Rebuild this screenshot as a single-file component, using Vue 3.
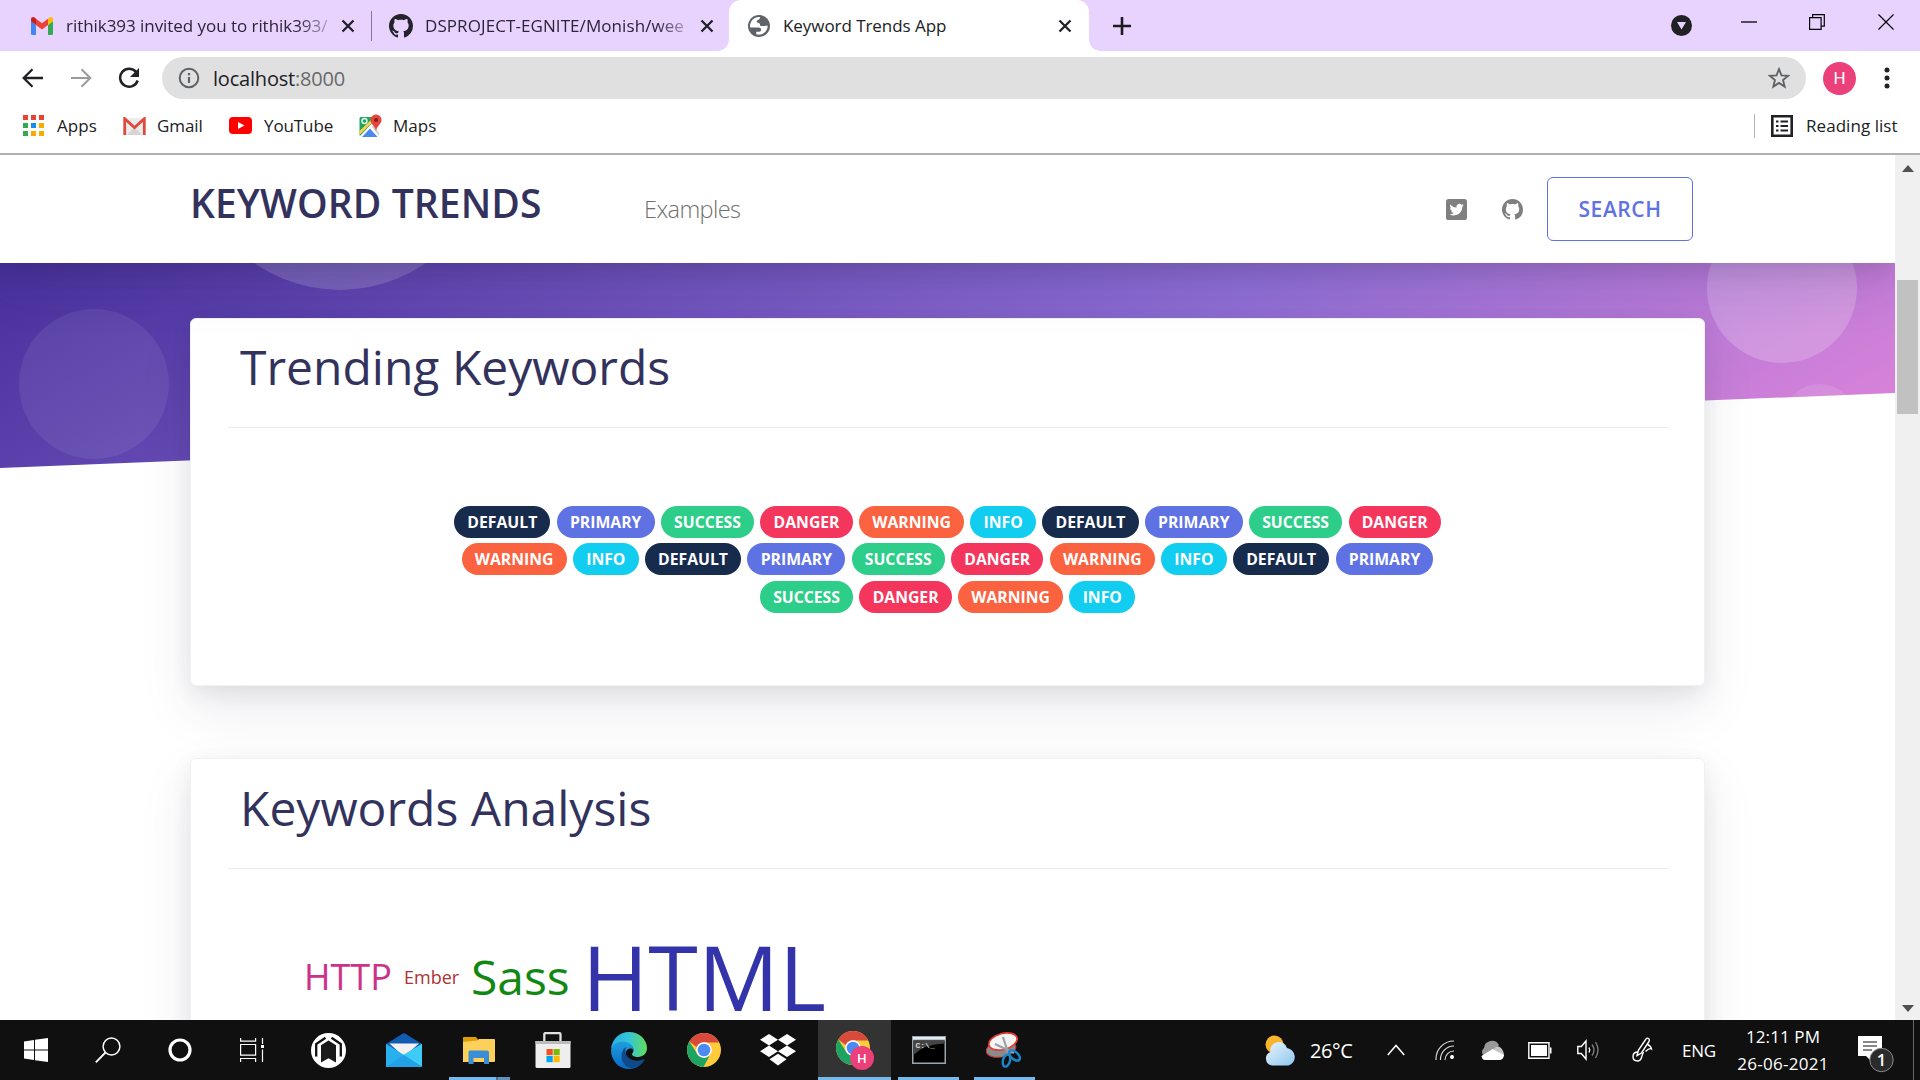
<script setup>
const kinds = ['default', 'primary', 'success', 'danger', 'warning', 'info']
const rows = [
  [0, 1, 2, 3, 4, 5, 0, 1, 2, 3],
  [4, 5, 0, 1, 2, 3, 4, 5, 0, 1],
  [2, 3, 4, 5],
].map((r) => r.map((i) => kinds[i]))
const appDots = ['#ea4335', '#ea4335', '#ea4335', '#34a853', '#1a8cf0', '#f9ab00', '#34a853', '#f9ab00', '#f9ab00']
const octocat =
  'M8 0C3.58 0 0 3.58 0 8c0 3.54 2.29 6.53 5.47 7.59.4.07.55-.17.55-.38 0-.19-.01-.82-.01-1.49-2.01.37-2.53-.49-2.69-.94-.09-.23-.48-.94-.82-1.13-.28-.15-.68-.52-.01-.53.63-.01 1.08.58 1.23.82.72 1.21 1.87.87 2.33.66.07-.52.28-.87.51-1.07-1.78-.2-3.64-.89-3.64-3.95 0-.87.31-1.59.82-2.15-.08-.2-.36-1.02.08-2.12 0 0 .67-.21 2.2.82.64-.18 1.32-.27 2-.27s1.36.09 2 .27c1.53-1.04 2.2-.82 2.2-.82.44 1.1.16 1.92.08 2.12.51.56.82 1.27.82 2.15 0 3.07-1.87 3.75-3.65 3.95.29.25.54.73.54 1.48 0 1.07-.01 1.93-.01 2.2 0 .21.15.46.55.38A8.01 8.01 0 0016 8c0-4.42-3.58-8-8-8z'
</script>

<template>
  <div class="screen">
    <!-- Tab strip -->
    <header class="tabs">
      <div class="tab t1">
        <svg class="fav" width="22" height="18" viewBox="0 0 22 18">
          <path fill="#4285f4" d="M0 4v12.500Q0 18 1.500 18H5V8z" />
          <path fill="#34a853" d="M22 4v12.500Q22 18 20.500 18H17V8z" />
          <path fill="#ea4335" d="M5 8V1.800L11 6.300l6-4.500V8l-6 4.500z" />
          <path fill="#c5221f" d="M0 4V2.300C0 .1 2.500-.6 4 .7L5 1.800V8L0 4.300z" />
          <path fill="#fbbc04" d="M22 4V2.300C22 .1 19.500-.6 18 .7L17 1.800V8l5-3.700z" />
        </svg>
        <span class="label l1">rithik393 invited you to rithik393/</span>
        <svg class="x" width="14" height="14" viewBox="0 0 14 14"><path d="M1.500 1.500l11 11M12.500 1.500l-11 11" /></svg>
      </div>
      <i class="tsep"></i>
      <div class="tab t2">
        <svg class="fav" width="24" height="24" viewBox="0 0 16 16"><path fill="#24222b" :d="octocat" /></svg>
        <span class="label l2">DSPROJECT-EGNITE/Monish/wee</span>
        <svg class="x" width="14" height="14" viewBox="0 0 14 14"><path d="M1.500 1.500l11 11M12.500 1.500l-11 11" /></svg>
      </div>
      <div class="tab active">
        <svg class="fav" width="22" height="22" viewBox="2 2 20 20">
          <circle cx="12" cy="12" r="10" fill="#5f6368" />
          <path fill="#fff" d="M13 3.900c-.1 1.800-.8 2.300-1.900 2.600-1.400.4-1.500 1.900-.5 2.400 1.300.5 2.400.8 2.400 2.100 0 .8.6 1.100 1.700 1.100 1.900 0 2.800-.6 5.200-.3-.1 4.600-3.700 8.100-8 8.100-.8 0-1.700-.1-2.400-.4v-2.300h2.700c1 0 1.700-.8 1.700-1.800 0-1.400-1-2.100-2.400-2.100H4c-.3-1-.2-2.500.2-3.500 1.100-3.700 4.600-6.500 8.800-5.900z" />
        </svg>
        <span class="label l3">Keyword Trends App</span>
        <svg class="x" width="14" height="14" viewBox="0 0 14 14"><path d="M1.500 1.500l11 11M12.500 1.500l-11 11" /></svg>
      </div>
      <svg class="plus" width="18" height="18" viewBox="0 0 18 18"><path d="M9 0v18M0 9h18" stroke="#1c1b22" stroke-width="2.600" /></svg>
      <div class="win">
        <svg width="21" height="21" viewBox="0 0 21 21"><circle cx="10.500" cy="10.500" r="10.500" fill="#202124" /><path d="M6 7h9l-4.500 7.500z" fill="#e8d3ff" /></svg>
        <svg class="w2" width="16" height="16" viewBox="0 0 16 16"><path d="M0 8h16" stroke="#000" stroke-width="1.300" /></svg>
        <svg class="w3" width="16" height="16" viewBox="0 0 16 16"><path d="M.6 3.600h11.500v11.700H.6zM3.600 3.600V.6h11.700v11.500h-3.200" fill="none" stroke="#000" stroke-width="1.200" /></svg>
        <svg class="w4" width="16" height="16" viewBox="0 0 16 16"><path d="M.5.5l15 15M15.500.5l-15 15" stroke="#000" stroke-width="1.200" /></svg>
      </div>
    </header>

    <!-- Address bar -->
    <div class="toolbar">
      <svg width="22" height="20" viewBox="0 0 22 20"><path d="M21 10H2M10.500 1.200L1.700 10l8.800 8.800" fill="none" stroke="#202124" stroke-width="2.300" /></svg>
      <svg class="fwd" width="22" height="20" viewBox="0 0 22 20"><path d="M1 10h19M11.500 1.200l8.800 8.800-8.800 8.800" fill="none" stroke="#9b9b9b" stroke-width="2" /></svg>
      <svg class="rel" width="22" height="22" viewBox="0 0 22 22"><path d="M18.500 5.500A9 9 0 1 0 19.700 13.500" fill="none" stroke="#202124" stroke-width="2.500" /><path d="M21 1v9h-9z" fill="#202124" /></svg>
      <div class="omni">
        <svg width="22" height="22" viewBox="0 0 22 22"><circle cx="11" cy="11" r="9.300" fill="none" stroke="#5f6368" stroke-width="2" /><path d="M11 10v6M11 6v2.200" stroke="#5f6368" stroke-width="2.200" /></svg>
        <span class="url">localhost<em>:8000</em></span>
        <svg class="star" width="22" height="22" viewBox="0 0 24 24"><path d="M12 2.300l2.700 6.800 7.300.5-5.600 4.600 1.800 7.200L12 17.400l-6.200 4 1.800-7.200L2 9.600l7.300-.5z" fill="none" stroke="#5f6368" stroke-width="2" /></svg>
      </div>
      <span class="avatar">H</span>
      <svg class="dots" width="6" height="22" viewBox="0 0 6 22"><circle cx="3" cy="3" r="2.500" /><circle cx="3" cy="11" r="2.500" /><circle cx="3" cy="19" r="2.500" /></svg>
    </div>

    <!-- Bookmarks -->
    <div class="marks">
      <span class="apps"><i v-for="(c, i) in appDots" :key="i" :style="{ background: c }"></i></span>
      <span class="mk m1">Apps</span>
      <svg class="i2" width="23" height="18" viewBox="0 0 23 18"><path fill="#ececec" d="M1 1h21v17H1z" /><path fill="#d5d5d5" d="M4 18l7.500-8 7.500 8z" /><path d="M1.700 18V1.700L11.500 10.500 21.300 1.700V18" fill="none" stroke="#dd4b3e" stroke-width="2.800" /></svg>
      <span class="mk m2">Gmail</span>
      <svg class="i3" width="23" height="17" viewBox="0 0 23 17"><rect width="23" height="17" rx="4" fill="red" /><path d="M9 5l6.500 3.500L9 12z" fill="#fff" /></svg>
      <span class="mk m3">YouTube</span>
      <svg class="i4" width="23" height="24" viewBox="0 0 23 24">
        <path fill="#1fa463" d="M2 3h17v19H2q-1.500 0-1.500-1.500V4.500Q.5 3 2 3z" />
        <path fill="#fff" d="M1 22L14 8l6 4v10z" /><path fill="#4a89f3" d="M3 23l8-8.500 7.500 8.500z" /><path fill="#ffd04b" d="M.5 17L13 5l1.500 2L.5 21z" /><path fill="#cfd3d6" d="M13 13l2-2 5 8v3z" />
        <circle cx="5.500" cy="7" r="2.500" fill="none" stroke="#e8f5e9" stroke-width="1.400" />
        <path fill="#e8453c" d="M17 .5a5.500 5.500 0 0 1 5.500 5.500c0 4-4.500 5.500-5.500 11-1-5.500-5.500-7-5.500-11A5.500 5.500 0 0 1 17 .5z" /><circle cx="17" cy="6" r="2" fill="#7b231e" />
      </svg>
      <span class="mk m4">Maps</span>
      <i class="msep"></i>
      <svg class="i5" width="22" height="22" viewBox="0 0 22 22"><path d="M1.300 1.300h19.400v19.400H1.300z" fill="none" stroke="#202124" stroke-width="2.600" /><path d="M5 6.500h2.500M5 11h2.500M5 15.500h2.500M9.500 6.500H17M9.500 11H17M9.500 15.500H17" stroke="#202124" stroke-width="2.200" /></svg>
      <span class="mk m5">Reading list</span>
    </div>

    <!-- Web page -->
    <div class="view">
      <main class="page">
        <nav class="nav">
          <h1>KEYWORD TRENDS</h1>
          <a class="ex">Examples</a>
          <svg class="tw" width="21" height="21" viewBox="0 0 24 24"><rect width="24" height="24" rx="3" fill="#7f7f7f" /><path fill="#fff" transform="translate(4 4) scale(.68)" d="M23.953 4.570a10 10 0 01-2.825.775 4.958 4.958 0 002.163-2.723c-.951.555-2.005.959-3.127 1.184a4.920 4.920 0 00-8.384 4.482C7.690 8.095 4.067 6.130 1.640 3.162a4.822 4.822 0 00-.666 2.475c0 1.710.87 3.213 2.188 4.096a4.904 4.904 0 01-2.228-.616v.06a4.923 4.923 0 003.946 4.827 4.996 4.996 0 01-2.212.085 4.936 4.936 0 004.604 3.417 9.867 9.867 0 01-6.102 2.105c-.39 0-.779-.023-1.170-.067a13.995 13.995 0 007.557 2.209c9.053 0 13.998-7.496 13.998-13.985 0-.21 0-.42-.015-.63A9.935 9.935 0 0024 4.590z" /></svg>
          <svg class="gh" width="21" height="21" viewBox="0 0 16 16"><path fill="#7f7f7f" :d="octocat" /></svg>
          <a class="search">SEARCH</a>
        </nav>
        <div class="hero"><i class="b1"></i><i class="b2"></i><i class="b3"></i><i class="b4"></i></div>
        <div class="content">
          <section class="card first">
            <h2>Trending Keywords</h2>
            <hr />
            <div class="badges">
              <div v-for="(row, r) in rows" :key="r" class="row">
                <span v-for="(k, i) in row" :key="i" class="badge" :class="k">{{ k }}</span>
              </div>
            </div>
          </section>
          <section class="card second">
            <h2>Keywords Analysis</h2>
            <hr />
            <div class="cloud">
              <span class="http">HTTP</span><span class="ember">Ember</span><span class="sass">Sass</span><span class="html">HTML</span>
            </div>
          </section>
        </div>
      </main>
      <aside class="scroll">
        <svg width="12" height="7" viewBox="0 0 12 7"><path d="M6 0l6 7H0z" fill="#505050" /></svg>
        <i class="thumb"></i>
        <svg width="12" height="7" viewBox="0 0 12 7"><path d="M6 7l6-7H0z" fill="#505050" /></svg>
      </aside>
    </div>

    <!-- Taskbar -->
    <footer class="bar">
      <div class="cell" style="width: 72px">
        <svg width="24" height="24" viewBox="0 0 24 24"><path fill="#fff" d="M0 3.400L10 2v9.500H0zM11 1.800L24 0v11.500H11zM0 12.500h10V22L0 20.600zM11 12.500h13V24l-13-1.800z" /></svg>
      </div>
      <div class="cell" style="width: 72px">
        <svg width="26" height="26" viewBox="0 0 26 26"><path d="M10.500 15.500L.8 25.300" stroke="#fff" stroke-width="1.800" /><circle cx="16.500" cy="9.500" r="8.400" fill="none" stroke="#fff" stroke-width="1.500" /></svg>
      </div>
      <div class="cell" style="width: 72px">
        <svg width="24" height="24" viewBox="0 0 24 24"><circle cx="12" cy="12" r="10" fill="none" stroke="#fff" stroke-width="3.200" /></svg>
      </div>
      <div class="cell" style="width: 72px">
        <svg width="24" height="24" viewBox="0 0 24 24" fill="none" stroke="#fff" stroke-width="1.200"><path d="M.6 6.500h15v10.700H.6zM.6 0v3.200h15V0M.6 24v-3.500h15V24M22.500 0v6M22.500 11.500V24" /><path fill="#fff" stroke="none" d="M21 7h3v3h-3z" /></svg>
      </div>
      <div class="cell" style="width: 80px">
        <svg width="35" height="35" viewBox="0 0 35 35"><circle cx="17.500" cy="17.500" r="17.500" fill="#fff" /><path fill="#1a1a1a" d="M10 12.300l7.500-4.800 7.500 4.800V29.500l-7.500-4.300-7.500 4.300z" /><path d="M14.500 4.800L5.200 11v12.500M20.500 4.800l9.300 6.200v12.500" fill="none" stroke="#101010" stroke-width="2.300" /></svg>
      </div>
      <div class="cell" style="width: 72px">
        <svg width="36" height="34" viewBox="0 0 36 34"><path fill="#0f5cb0" d="M0 11L16.500.8q1.500-1 3 0L36 11v8H0z" /><path fill="#f2f2f2" d="M3.500 10.500h29.500L20 22h-4z" /><path fill="#28b0ee" d="M0 10.800L18 22 36 34H0z" /><path fill="#3ecbf6" d="M36 10.800L17 22l19 12z" /><path fill="#1b97e4" d="M0 34l18-12.200L36 34z" opacity=".6" /></svg>
      </div>
      <div class="cell" style="width: 78px">
        <svg width="32" height="27" viewBox="0 0 32 27"><path fill="#e09c09" d="M0 1q0-1 1-1h12l2 2.500V8H0z" /><path fill="#fdd05a" d="M0 5l14-1.500L16 2h15q1 0 1 1v21q0 1-1 1H0z" /><path fill="#3a8ed8" d="M7 13.500h17q2 0 2 2V27h-5v-6H10.500v6H5.500V15q0-1.500 1.500-1.500z" /></svg>
        <b class="ul split" style="width: 61px"></b>
      </div>
      <div class="cell" style="width: 70px">
        <svg width="36" height="36" viewBox="0 0 36 36"><path d="M9.300 12V2.500q0-1.500 1.500-1.500H24q1.500 0 1.500 1.500V12" fill="none" stroke="#e0e0e0" stroke-width="2.300" /><path fill="#eee" d="M.5 9h35v25.500q0 1.500-1.500 1.500H2q-1.500 0-1.500-1.500z" /><path fill="#bbb" d="M.5 9h35v3H.5z" /><path fill="#f25022" d="M11.500 17h6.200v6.200h-6.200z" /><path fill="#7fba00" d="M18.500 17h6.200v6.200h-6.200z" /><path fill="#00a4ef" d="M11.500 24h6.200v6.200h-6.200z" /><path fill="#ffb900" d="M18.500 24h6.200v6.200h-6.200z" /></svg>
      </div>
      <div class="cell" style="width: 82px">
        <svg width="36" height="37" viewBox="0 0 36 37">
          <defs>
            <linearGradient id="eg"><stop offset="0" stop-color="#2aaee8" /><stop offset=".5" stop-color="#34c6d8" /><stop offset="1" stop-color="#62dc58" /></linearGradient>
            <linearGradient id="eb" x2="0" y2="1"><stop offset="0" stop-color="#1f9fe0" /><stop offset="1" stop-color="#0a68c4" /></linearGradient>
          </defs>
          <path fill="url(#eg)" d="M0 17C1 7 8.500 0 18 0c10 0 18 7.500 18 16 0 5.500-4 9-9 9-3.500 0-6-1.200-6-2.700 0-1 1.500-1.800 1.500-4.300 0-3.500-3.500-7-9-7C7 11 2 14 0 17z" />
          <path fill="url(#eb)" d="M0 18c1-5 6-8.500 12-8.500 6 0 10.500 4 10.500 8.500-2.500-3-8-1.500-8 5 0 7 7 12 14 10-3 2.500-6.500 4-10.500 4C8 37 0 29 0 18z" />
          <path fill="#114a8b" d="M14.500 15c-2.500 2-4 5.500-4 9 0 7 5 12.500 12 12.500 4.500-1 8.500-4 11-8.500.3-.7-.3-1-1-.7-8 3.700-18-.3-18-8.300z" />
        </svg>
      </div>
      <div class="cell" style="width: 68px">
        <svg width="34" height="34" viewBox="0 0 34 34"><circle cx="17" cy="17" r="17" fill="#ffca3c" /><path fill="#da4a3c" d="M2.300 8.500A17 17 0 0 1 31.700 8.500L32 9.500H17A7.800 7.800 0 0 0 9.600 14z" /><path fill="#1da462" d="M2.300 8.500A17 17 0 0 0 16.500 34l7-13A7.800 7.800 0 0 1 10 20.500z" /><circle cx="17" cy="17" r="7.800" fill="#fff" /><circle cx="17" cy="17" r="6.300" fill="#4a8af4" /></svg>
      </div>
      <div class="cell" style="width: 80px">
        <svg width="36" height="32" viewBox="0 0 36 32"><path fill="#fff" d="M9 0l9 5.800-9 5.700L0 5.800zM27 0l9 5.800-9 5.700-9-5.700zM9 11.500l9 5.800L9 23l-9-5.700zM27 11.500l9 5.800-9 5.700-9-5.700zM18 19.800l8.500 5.500L18 31.500l-8.500-6.200z" /></svg>
      </div>
      <div class="cell on" style="width: 73px">
        <svg width="38" height="40" viewBox="0 0 38 40"><g transform="translate(0 1)"><circle cx="17" cy="17" r="17" fill="#ffca3c" /><path fill="#da4a3c" d="M2.300 8.500A17 17 0 0 1 31.700 8.500L32 9.500H17A7.800 7.800 0 0 0 9.600 14z" /><path fill="#1da462" d="M2.300 8.500A17 17 0 0 0 16.500 34l7-13A7.800 7.800 0 0 1 10 20.500z" /><circle cx="17" cy="17" r="7.800" fill="#fff" /><circle cx="17" cy="17" r="6.300" fill="#4a8af4" /></g><circle cx="26" cy="28" r="12" fill="#ec407a" /><text x="26" y="32.500" text-anchor="middle" font-family="Open Sans, sans-serif" font-weight="600" font-size="13" fill="#fff">H</text></svg>
        <b class="ul" style="width: 73px"></b>
      </div>
      <div class="cell" style="width: 75px">
        <svg width="34" height="28" viewBox="0 0 34 28"><path fill="#9aa5ad" d="M0 0h34v28H0z" /><path fill="#e4ebf0" d="M1 1h32v2.500H1z" /><path fill="#000" d="M1.500 4.500h31v22h-31z" /><path fill="#444" d="M1.500 4.500h31v3Q12 8 1.500 19z" /><text x="3.500" y="11.500" font-family="Liberation Mono, monospace" font-weight="700" font-size="8" fill="#ddd">C:\_</text></svg>
        <b class="ul" style="width: 61px"></b>
      </div>
      <div class="cell" style="width: 76px">
        <svg width="36" height="36" viewBox="0 0 36 36"><ellipse cx="15" cy="17" rx="15" ry="8" fill="#8b8b8b" stroke="#c0392b" transform="rotate(-10 15 17)" /><ellipse cx="17" cy="9.500" rx="14.500" ry="8" fill="#f4f4f4" stroke="#e23b32" stroke-width="1.700" transform="rotate(-15 17 9.500)" /><path d="M17 5l5.500 17M9 12l19 9" stroke="#9aa2a8" stroke-width="2.200" /><g fill="none" stroke="#1a87cc" stroke-width="2.400"><ellipse cx="20.500" cy="28.500" rx="3.500" ry="6.300" transform="rotate(15 20.500 28.500)" /><ellipse cx="28.500" cy="23.500" rx="3.600" ry="6.500" transform="rotate(-48 28.500 23.500)" /></g></svg>
        <b class="ul" style="width: 61px"></b>
      </div>

      <div class="tray">
        <svg class="wx" width="31" height="31" viewBox="0 0 31 31">
          <defs><linearGradient id="cl" x2="1" y2="1"><stop offset="0" stop-color="#eaf5fd" /><stop offset="1" stop-color="#8ec6ef" /></linearGradient></defs>
          <circle cx="9.500" cy="9.500" r="9" fill="#f9b52e" /><path fill="url(#cl)" d="M7 30.500a7 7 0 0 1-1.500-13.500A8.500 8.500 0 0 1 22 13a9 9 0 0 1 1.500 17.500z" />
        </svg>
        <span class="temp">26°C</span>
        <svg class="s1" width="18" height="12" viewBox="0 0 18 12"><path d="M.8 11L9 1.500 17.200 11" fill="none" stroke="#fff" stroke-width="1.500" /></svg>
        <svg class="s2" width="20" height="20" viewBox="0 0 20 20" fill="none" stroke="#fff" stroke-width="1.200"><path d="M1 20A18 18 0 0 1 19 1M5.500 20A13.500 13.500 0 0 1 19 6M10 20a9 9 0 0 1 9-9" opacity=".85" /><circle cx="17" cy="17" r="1.400" fill="#fff" /></svg>
        <svg class="s3" width="25" height="20" viewBox="0 0 25 20"><path fill="#999" d="M3 15A5 5 0 0 1 4 8 8 8 0 0 1 19 5l-6 8z" /><path fill="#c4c4c4" d="M13 9.500Q17 4.500 21 8q3 3 3 8z" /><path fill="#fff" d="M1.500 16L12.500 9 24 15q-.5 5-5 5H5q-3 0-3.500-4z" /></svg>
        <svg class="s4" width="24" height="17" viewBox="0 0 24 17"><path d="M.8.8H21v15.400H.8z" fill="none" stroke="#fff" stroke-width="1.400" /><path fill="#fff" d="M3 3h16v11H3zM22 5.500h1.500v6H22z" /></svg>
        <svg class="s5" width="23" height="22" viewBox="0 0 23 22" fill="none" stroke="#fff" stroke-width="1.400"><path d="M.8 7.500h3.500L9 2v18l-4.700-5.500H.8z" /><path d="M12 8.500q1.500 2.500 0 5" /><path d="M15 5.500q4 5.500 0 11M18.500 3q5 8 0 16" opacity=".45" /></svg>
        <svg class="s6" width="21" height="26" viewBox="0 0 21 26" fill="none" stroke="#fff" stroke-width="1.400"><path d="M5 18.500L6.500 13 14 2q1.500-1.800 3 0 .8 1.300 0 2.500L9.500 16z" /><path d="M15 7q4 2 4.500 5-2-1.500-6 2.500M6 15q-5 0-5 4.500t4.500 4.500q3 0 4-3.500t2-5.500" /></svg>
        <span class="eng">ENG</span>
        <span class="clock"><span class="tm">12:11 PM</span><span class="dt">26-06-2021</span></span>
        <span class="note">
          <svg width="36" height="38" viewBox="0 0 36 38"><path fill="#fff" d="M0 0h24v20H14v6l-6-6H0z" /><path d="M5 6h14M5 10h14M5 14h9" stroke="#101010" stroke-width="1.200" /><circle cx="23.500" cy="24" r="11.700" fill="#2b2b2b" stroke="#888" /><text x="23.500" y="30" text-anchor="middle" font-family="Open Sans, sans-serif" font-weight="600" font-size="16.500" fill="#fff">1</text></svg>
        </span>
        <i class="peek"></i>
      </div>
    </footer>
  </div>
</template>

<style>
body { margin: 0; overflow: hidden; }
</style>

<style scoped>
* { box-sizing: border-box; }
svg { display: block; flex: none; }
.screen { width: 1920px; height: 1080px; display: flex; flex-direction: column; overflow: hidden; background: #fff; font-family: "Open Sans", "Noto Sans", sans-serif; }

.tabs { height: 51px; flex: none; display: flex; align-items: center; background: #e8d3ff; color: #2c2438; }
.tab { display: flex; align-items: center; height: 51px; flex: none; }
.t1 { width: 371px; padding-left: 31px; }
.t2 { width: 357px; padding-left: 17px; }
.active { width: 360px; padding-left: 19px; background: #fff; border-radius: 12px 12px 0 0; position: relative; color: #202124; }
.active::before, .active::after { content: ""; position: absolute; bottom: 0; width: 11px; height: 11px; }
.active::before { left: -11px; background: radial-gradient(circle at 0 0, transparent 10.500px, #fff 11px); }
.active::after { right: -11px; background: radial-gradient(circle at 100% 0, transparent 10.500px, #fff 11px); }
.label { font-size: 17px; line-height: 24px; white-space: nowrap; flex: none; }
.l1 { margin-left: 13px; width: 263px; letter-spacing: -.05px; -webkit-mask-image: linear-gradient(90deg, #000 88%, transparent 104%); }
.l2 { margin-left: 12px; width: 263px; letter-spacing: .08px; -webkit-mask-image: linear-gradient(90deg, #000 88%, transparent 104%); }
.l3 { margin-left: 13px; width: 275px; letter-spacing: -.06px; }
.x { margin-left: 12px; stroke: #202124; stroke-width: 2.300; fill: none; }
.t1 .x { margin-left: 12px; }
.t2 .x { margin-left: 12px; }
.l3 + .x { margin-left: 0; }
.tsep { width: 1px; height: 30px; background: #85779a; flex: none; }
.plus { margin-left: 24px; }
.win { margin-left: auto; display: flex; align-items: center; padding-right: 26px; }
.win svg { position: relative; }
.w2 { margin-left: 49px; top: -4px; }
.w3 { margin-left: 52px; top: -4px; }
.w4 { margin-left: 53px; top: -4px; }

.toolbar { height: 54px; flex: none; display: flex; align-items: center; padding-left: 22px; }
.fwd { margin-left: 26px; }
.rel { margin-left: 26px; }
.omni { margin-left: 22px; width: 1644px; height: 42px; border-radius: 21px; background: #e0e0e0; display: flex; align-items: center; padding: 0 16px 0 16px; }
.url { margin: 1px 0 0 13px; font-size: 20px; letter-spacing: -.2px; color: #202124; line-height: 28px; }
.url em { font-style: normal; color: #696969; }
.star { margin-left: auto; }
.avatar { margin-left: 17px; width: 33px; height: 33px; border-radius: 50%; background: #ec407a; color: #fff; font: 17px/33px Roboto, sans-serif; text-align: center; }
.dots { margin-left: 28px; fill: #202124; }

.marks { flex: none; display: flex; align-items: center; padding: 0 22px 5px 23px; border-bottom: 2px solid #b0b0b0; margin-top: -2px; height: 52px; color: #202124; }
.apps { display: grid; grid-template-columns: repeat(3, 5px); grid-auto-rows: 5px; gap: 3px; }
.mk { font-size: 17px; line-height: 24px; white-space: nowrap; flex: none; padding-top: 1px; }
.m1 { margin-left: 13px; width: 66px; letter-spacing: .1px; }
.m2 { margin-left: 11px; width: 72px; letter-spacing: -.1px; }
.m3 { margin-left: 12px; width: 95px; letter-spacing: -.1px; }
.m4 { margin-left: 11px; letter-spacing: 0; }
.msep { margin-left: auto; width: 1px; height: 24px; background: #b4b4b4; }
.i5 { margin-left: 16px; }
.m5 { margin-left: 13px; width: 92px; letter-spacing: .05px; }

.view { flex: none; height: 865px; display: flex; overflow: hidden; }
.page { width: 1895px; height: 865px; position: relative; overflow: hidden; }
.nav { position: relative; z-index: 2; height: 108px; display: flex; align-items: center; padding-left: 190px; background: #fff; box-shadow: 0 22px 52px rgba(50, 50, 93, .13), 0 7px 22px rgba(0, 0, 0, .1); }
.nav h1 { margin: 0 0 12px; width: 454px; font-size: 39px; font-weight: 600; line-height: 50px; color: #32325d; letter-spacing: .1px; white-space: nowrap; }
.ex { width: 802px; font-size: 23.500px; line-height: 36px; font-weight: 300; color: #707070; letter-spacing: -.58px; }
.gh { margin-left: 35px; }
.search { margin-left: 24px; width: 146px; height: 64px; border: 1.500px solid #5e72e4; border-radius: 6px; color: #5e72e4; font-size: 21px; font-weight: 600; line-height: 62px; text-align: center; letter-spacing: .55px; }
.hero { position: absolute; left: 0; top: 108px; width: 1895px; height: 206px; overflow: hidden; clip-path: polygon(0 0, 100% 0, 100% 130px, 0 205px); background: linear-gradient(150deg, #281483 15%, #8f6ed5 70%, #d782d9 94%) 0 -625px / 1895px 870px no-repeat; }
.hero i { position: absolute; border-radius: 50%; }
.b1 { width: 300px; height: 300px; left: 190px; top: -273px; background: rgba(255, 255, 255, .17); }
.b2 { width: 150px; height: 150px; left: 19px; top: 46px; background: rgba(255, 255, 255, .07); }
.b3 { width: 150px; height: 150px; left: 1707px; top: -50px; background: rgba(255, 255, 255, .2); }
.b4 { width: 75px; height: 75px; left: 1782px; top: 121px; background: rgba(255, 255, 255, .1); }
.content { position: relative; padding: 55px 190px 0; display: flex; flex-direction: column; gap: 72px; }
.card { width: 1515px; flex: none; background: #fff; border: 1px solid #f1f1f2; border-radius: 6px; box-shadow: 0 22px 52px rgba(50, 50, 93, .1), 0 7px 22px rgba(0, 0, 0, .07); padding: 13px 35px 0 37px; }
.first { height: 368px; }
.second { height: 500px; padding-top: 14px; }
.card h2 { margin: 0 0 0 12px; font-size: 48px; font-weight: 400; line-height: 70px; color: #32325d; letter-spacing: 0; white-space: nowrap; }
.card hr { margin: 25px 0 0; border: 0; height: 1px; background: #e9ecef; }
.badges { margin-top: 78px; display: flex; flex-direction: column; gap: 5.400px; padding-right: 2px; }
.row { display: flex; justify-content: center; gap: 6.300px; }
.badge { height: 32px; padding: 0 13.200px; border-radius: 16px; font-size: 15.750px; line-height: 32px; font-weight: 700; color: #fff; text-transform: uppercase; }
.default { background: #172b4d; }
.primary { background: #5e72e4; }
.success { background: #2dce89; }
.danger { background: #f5365c; }
.warning { background: #fb6340; }
.info { background: #11cdef; }
.cloud { margin: 38px 0 0 76px; height: 140px; display: flex; align-items: center; line-height: 1.150; white-space: nowrap; }
.http { font-size: 36px; color: #c38; width: 100px; }
.ember { font-size: 18px; color: #a33; width: 67px; }
.sass { font-size: 48px; color: #181; width: 111px; }
.html { font-size: 90px; color: #33a; }

.scroll { width: 25px; background: #f0f0f0; display: flex; flex-direction: column; align-items: center; padding: 10px 0 8px; }
.thumb { width: 21px; height: 134px; background: #c1c1c1; margin: 108px 0 auto; }

.bar { flex: none; height: 60px; display: flex; background: #101010; color: #fff; }
.cell { flex: none; height: 60px; display: flex; align-items: center; justify-content: center; position: relative; }
.on { background: #333; }
.ul { position: absolute; bottom: 0; height: 3px; background: #76b9ed; }
.split { background: linear-gradient(90deg, #76b9ed 47px, #46708f 47px 49px, #5e93bd 49px); }
.tray { margin-left: auto; display: flex; align-items: center; width: 655px; }
.temp { margin-left: 14px; width: 77px; font-size: 20px; letter-spacing: -.4px; }
.s2 { margin-left: 30px; }
.s3 { margin-left: 25px; }
.s4 { margin-left: 23px; }
.s5 { margin-left: 25px; }
.s6 { margin-left: 32px; }
.eng { margin-left: 29px; width: 54px; font-size: 17px; letter-spacing: -.3px; }
.clock { width: 94px; display: flex; flex-direction: column; align-items: center; font-size: 17px; line-height: 27px; white-space: nowrap; }
.tm { letter-spacing: .1px; }
.dt { letter-spacing: .35px; }
.note { margin-left: 28px; padding-top: 10px; }
.peek { width: 1px; height: 60px; background: #666; margin-left: auto; margin-right: 6px; }
.dt { letter-spacing: .3px; }
</style>
